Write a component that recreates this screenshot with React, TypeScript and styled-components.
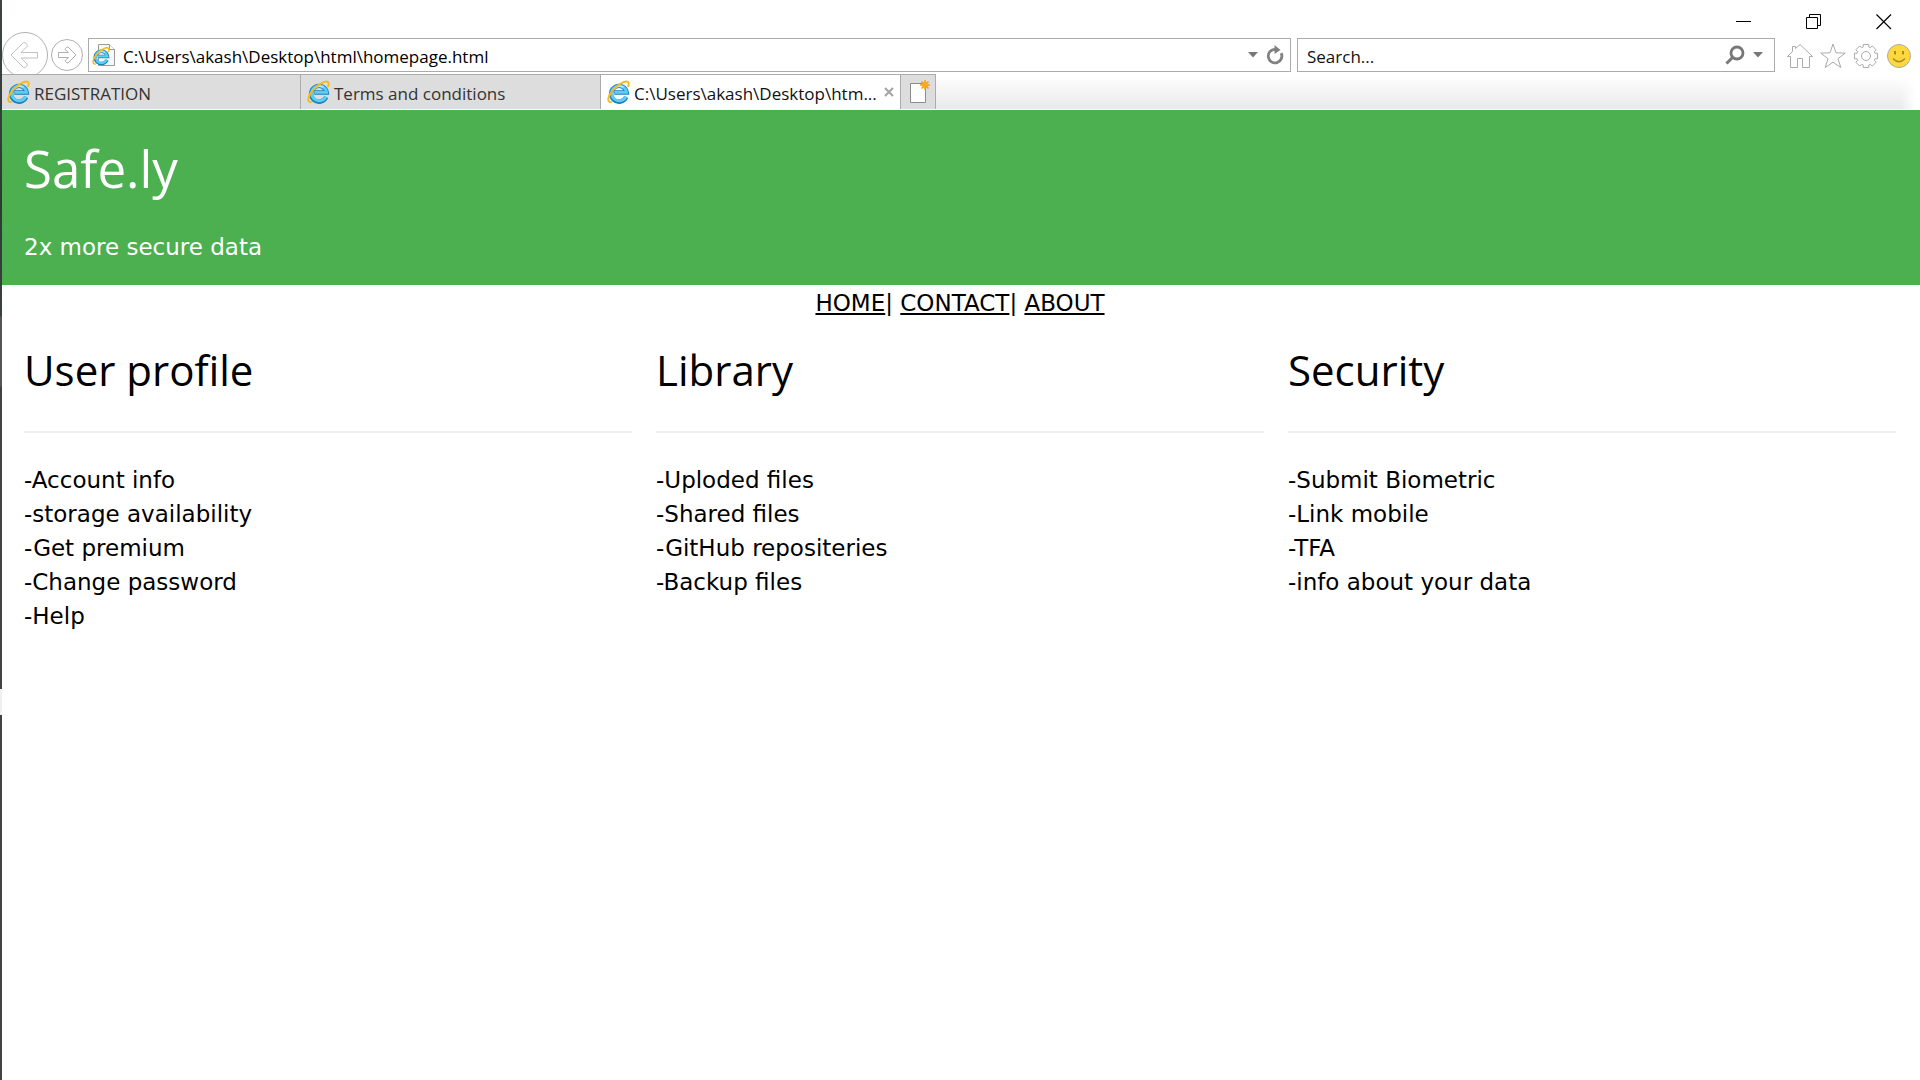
import React from "react";
import styled, { createGlobalStyle } from "styled-components";

const UI_FONT = '"Segoe UI", "Open Sans", "Noto Sans", sans-serif';
const BODY_FONT = 'Verdana, "DejaVu Sans", sans-serif';

const GlobalStyle = createGlobalStyle`
  *, *::before, *::after { box-sizing: border-box; }
  html, body { margin: 0; background: #fff; }
  button, input { font: inherit; color: inherit; }
`;

const Window = styled.div`
  position: relative;
  min-height: 100vh;
  background: #fff;
  color: #000;
  font-family: ${BODY_FONT};
  font-size: 23px;
  line-height: 34px;
`;

const DesktopEdge = styled.div`
  position: absolute;
  z-index: 3;
  top: 0;
  bottom: 0;
  left: 0;
  width: 2px;
  background: linear-gradient(
    #3f4443 0, #2b3a30 200px, #3a4040 316px, #555 317px, #555 386px, #424242 387px,
    #424242 689px, #fff 689px, #fff 690px, #f0f0f0 690px, #f0f0f0 715px, #424242 715px
  );
`;

const Chrome = styled.div`
  font-family: ${UI_FONT};
  font-size: 17px;
  line-height: 24px;
`;

const CaptionBar = styled.div`
  display: flex;
  justify-content: flex-end;
  height: 38px;
  padding-right: 1px;
`;

const PlainButton = styled.button`
  display: flex;
  flex: none;
  align-items: center;
  justify-content: center;
  padding: 0;
  border: 0;
  background: none;
`;

const CaptionButton = styled(PlainButton)`
  width: 70px;
  height: 43px;
`;

const Toolbar = styled.div`
  display: flex;
  height: 36px;
  padding: 0 8px 0 2px;
`;

const BackButton = styled(PlainButton)`
  width: 46px;
  height: 46px;
  margin-top: -6px;
`;

const ForwardButton = styled(PlainButton)`
  width: 32px;
  height: 34px;
  margin: 0 5px 0 3px;
`;

const Field = styled.div`
  display: flex;
  align-items: center;
  height: 34px;
  border: 1px solid #ababab;
  background: #fff;
`;

const AddressField = styled(Field)`
  flex: 1;
  gap: 7px;
  min-width: 0;
  padding: 0 5px 0 3px;
`;

const SearchField = styled(Field)`
  flex: 0 1 478px;
  gap: 8px;
  min-width: 0;
  margin: 0 12px 0 6px;
  padding: 0 11px 0 9px;
`;

const FieldInput = styled.input`
  flex: 1;
  min-width: 0;
  height: 30px;
  padding: 2px 0 0;
  border: 0;
  outline: 0;
  background: none;
  &::placeholder { color: #111; opacity: 1; }
`;

const ToolIcons = styled.div`
  display: flex;
  align-items: center;
  gap: 7px;
  height: 36px;
`;

const IconButton = styled(PlainButton)`
  width: 26px;
  height: 26px;
`;

const TabStrip = styled.div`
  position: relative;
  display: flex;
  height: 36px;
  padding-left: 1px;
  border-bottom: 1px solid #fff;
  background:
    linear-gradient(to left, #fff 4px, rgba(255, 255, 255, 0) 20px),
    linear-gradient(#fff 2px, #ebebeb 32px);
`;

const Tab = styled.div<{ $active?: boolean }>`
  display: flex;
  flex: 0 1 300px;
  align-items: center;
  min-width: 0;
  padding: 0 6px;
  border: solid #ababab;
  border-width: 1px 1px 0 0;
  background: ${(p) => (p.$active ? "#fff" : "#ddd")};
  color: ${(p) => (p.$active ? "#111" : "#333")};
`;

const TabButton = styled.button`
  display: flex;
  flex: 1;
  align-items: center;
  gap: 4px;
  min-width: 0;
  height: 34px;
  padding: 0;
  border: 0;
  background: none;
  white-space: nowrap;
`;

const TabTitle = styled.span`
  padding-top: 3px;
`;

const NewTab = styled(PlainButton)`
  width: 35px;
  padding-left: 3px;
  border: solid #ababab;
  border-width: 1px 1px 0 0;
  background: #ddd;
`;

const Banner = styled.header`
  padding: 17px 24px 21px;
  background: #4caf50;
  color: #fff;
`;

const SiteTitle = styled.h1`
  margin: 0 0 21px;
  font: 400 51px/82px ${UI_FONT};
`;

const Tagline = styled.p`
  margin: 0;
`;

const Nav = styled.nav`
  padding-top: 1px;
  text-align: center;
`;

const NavLink = styled.a`
  color: inherit;
  text-decoration: underline;
  text-decoration-thickness: 2px;
  text-underline-offset: 2px;
`;

const Columns = styled.main`
  display: grid;
  grid-template-columns: repeat(3, minmax(0, 1fr));
  gap: 24px;
  padding: 16px 24px;
`;

const SectionTitle = styled.h2`
  margin: 0 0 27px;
  font: 400 42px/68px ${UI_FONT};
`;

const Rule = styled.hr`
  margin: 0 0 30px;
  border: 0;
  border-top: 2px solid #eee;
`;

const Items = styled.ul`
  margin: 0;
  padding: 0;
  list-style: none;
`;

const Glyph = styled.svg`
  flex: none;
`;

const IeGlyph = () => (
  <>
    <path d="M20 17.2A8.2 8.2 0 1 1 20.6 12.6H7.6" fill="none" stroke="#1b7fc0" strokeWidth="4.6" />
    <path d="M19.8 16.6A7.8 7.8 0 1 1 20.4 12.4H8" fill="none" stroke="#5ccdf5" strokeWidth="3" />
    <path d="M7 9.4C9 6 14 5 17.4 7" fill="none" stroke="#b5ecfd" strokeWidth="1.4" />
    <path
      d="M4.2 22.6C-.6 22.8 1 15.6 6.4 9.6 11.600 3.600 19.400-.2 21.800 1.600 23 2.500 22.800 4.300 22 6"
      fill="none"
      stroke="#f6b91c"
      strokeWidth="2"
      strokeLinecap="round"
    />
  </>
);

const IeIcon = () => (
  <Glyph width="23" height="24" viewBox="0 0 24 24" aria-hidden="true">
    <IeGlyph />
  </Glyph>
);

const IePageIcon = () => (
  <Glyph width="24" height="24" viewBox="0 0 24 24" aria-hidden="true">
    <path d="M6.500 1.500h11l5 5v16h-16z" fill="#f8f8f8" stroke="#9a9a9a" />
    <path d="M17.500 1.500v5h5" fill="#fff" stroke="#9a9a9a" />
    <g transform="translate(0 4) scale(.75)">
      <IeGlyph />
    </g>
  </Glyph>
);

const Caret = () => (
  <svg width="10" height="6" aria-hidden="true">
    <path d="M0 0h10L5 5.500z" fill="#777" />
  </svg>
);

const columns = [
  {
    title: "User profile",
    items: ["-Account info", "-storage availability", "-Get premium", "-Change password", "-Help"],
  },
  { title: "Library", items: ["-Uploded files", "-Shared files", "-GitHub repositeries", "-Backup files"] },
  { title: "Security", items: ["-Submit Biometric", "-Link mobile", "-TFA", "-info about your data"] },
];

const gearPath = (() => {
  const points: string[] = [];
  for (let i = 0; i < 8; i++) {
    const mid = (i * Math.PI) / 4;
    [
      [-0.3, 9.4],
      [-0.24, 11.9],
      [0.24, 11.9],
      [0.3, 9.4],
    ].forEach(([offset, radius]) => {
      const x = 13 + radius * Math.sin(mid + offset);
      const y = 13 - radius * Math.cos(mid + offset);
      points.push(`${x.toFixed(2)} ${y.toFixed(2)}`);
    });
  }
  return `M${points.join("L")}Z`;
})();

export default function App() {
  return (
    <Window>
      <GlobalStyle />
      <DesktopEdge />
      <Chrome>
        <CaptionBar>
          <CaptionButton aria-label="Minimize">
            <svg width="16" height="16">
              <path d="M0 7.500h15" stroke="#000" />
            </svg>
          </CaptionButton>
          <CaptionButton aria-label="Restore">
            <svg width="16" height="16" fill="none" stroke="#000">
              <path d="M.5 3.500h11v11H.5zM3.500 3.500v-3h11v11h-3" />
            </svg>
          </CaptionButton>
          <CaptionButton aria-label="Close">
            <svg width="16" height="16">
              <path d="M.5.5l14.500 14.500M15 .5L.5 15" stroke="#000" strokeWidth="1.200" />
            </svg>
          </CaptionButton>
        </CaptionBar>

        <Toolbar>
          <BackButton aria-label="Back">
            <svg width="46" height="46" fill="none" stroke="#b0b0b0">
              <circle cx="23" cy="23" r="22.500" />
              <path
                d="M9 23L21.500 10.500Q23 10 25 12.500Q25.500 13.500 25 14.500L19 20.500H35.500V26H19L25 32Q25.500 33 25 34Q23 36.500 21.500 35.500Z"
                stroke="#c0c0c0"
                strokeLinejoin="round"
              />
            </svg>
          </BackButton>
          <ForwardButton aria-label="Forward">
            <svg width="32" height="32" fill="none" stroke="#b0b0b0">
              <circle cx="16" cy="16" r="15.500" />
              <path
                d="M25 16L17 24Q16 24.500 14.500 22.500Q14 21.500 14.500 21L17.500 18.500H7.500V13.500H17.500L14.500 11Q14 10.500 14.500 9.500Q16 7.500 17 8Z"
                strokeLinejoin="round"
              />
            </svg>
          </ForwardButton>
          <AddressField>
            <IePageIcon />
            <FieldInput aria-label="Address" defaultValue="C:\Users\akash\Desktop\html\homepage.html" />
            <PlainButton aria-label="Show address history">
              <Caret />
            </PlainButton>
            <PlainButton aria-label="Refresh">
              <svg width="20" height="20">
                <path d="M16.200 8.200A6.800 6.800 0 1 1 10 4.300" fill="none" stroke="#808080" strokeWidth="2.800" />
                <path d="M9.500 0l6 5-6 4z" fill="#808080" />
              </svg>
            </PlainButton>
          </AddressField>
          <SearchField>
            <FieldInput aria-label="Search" placeholder="Search..." />
            <PlainButton aria-label="Search">
              <svg width="20" height="20" fill="none" stroke="#777">
                <circle cx="12" cy="8" r="6" strokeWidth="2.800" />
                <path d="M7.500 12.500L1.500 18.500" strokeWidth="3" />
              </svg>
            </PlainButton>
            <PlainButton aria-label="Search options">
              <Caret />
            </PlainButton>
          </SearchField>
          <ToolIcons>
            <IconButton aria-label="Home">
              <svg width="26" height="26" fill="none" stroke="#ababab" strokeLinejoin="round">
                <path d="M.5 13.500L5.500 8.500V3.500H8.500V5.500L13 1.500 25.500 13.500H22.500V24.500H15.500V15.500H10.500V24.500H3.500V13.500Z" />
              </svg>
            </IconButton>
            <IconButton aria-label="Favorites">
              <svg width="26" height="26" fill="none" stroke="#ababab" strokeLinejoin="round">
                <path d="M13 1L16 9.800 25.300 10.100 18 15.700 20.800 24.500 13 19.200 5.200 24.500 8 15.700 .7 10.100 10 9.800Z" />
              </svg>
            </IconButton>
            <IconButton aria-label="Tools">
              <svg width="26" height="26" fill="none" stroke="#ababab" strokeLinejoin="round">
                <path d={gearPath} />
                <circle cx="13" cy="13" r="4.500" />
              </svg>
            </IconButton>
            <IconButton aria-label="Send a smile">
              <svg width="26" height="26">
                <circle cx="13" cy="13" r="11.500" fill="#ffd83d" stroke="#ababab" />
                <path d="M9 8v3.500M17 8v3.500" stroke="#a98c28" strokeWidth="2" />
                <path d="M7 15.500Q13 22 19 15.500" fill="none" stroke="#a98c28" strokeWidth="1.600" />
              </svg>
            </IconButton>
          </ToolIcons>
        </Toolbar>

        <TabStrip>
          <Tab>
            <TabButton>
              <IeIcon />
              <TabTitle>REGISTRATION</TabTitle>
            </TabButton>
          </Tab>
          <Tab>
            <TabButton>
              <IeIcon />
              <TabTitle>Terms and conditions</TabTitle>
            </TabButton>
          </Tab>
          <Tab $active>
            <TabButton>
              <IeIcon />
              <TabTitle>C:\Users\akash\Desktop\htm...</TabTitle>
            </TabButton>
            <PlainButton aria-label="Close tab">
              <svg width="10" height="10">
                <path d="M1 1l8 8M9 1L1 9" stroke="#a6a6a6" strokeWidth="2.200" />
              </svg>
            </PlainButton>
          </Tab>
          <NewTab aria-label="New tab">
            <svg width="22" height="24">
              <path d="M1.500 3.500h15v19h-15z" fill="#fff" stroke="#8c8c8c" />
              <path d="M16 0v10M11 5h10M12.500 1.500l7 7M19.500 1.500l-7 7" stroke="#f39c12" strokeWidth="1.500" />
              <circle cx="16" cy="5" r="3" fill="#fba919" />
            </svg>
          </NewTab>
        </TabStrip>
      </Chrome>

      <Banner>
        <SiteTitle>Safe.ly</SiteTitle>
        <Tagline>2x more secure data</Tagline>
      </Banner>
      <Nav>
        <NavLink href="#home">HOME</NavLink>| <NavLink href="#contact">CONTACT</NavLink>|{" "}
        <NavLink href="#about">ABOUT</NavLink>
      </Nav>
      <Columns>
        {columns.map((column) => (
          <section key={column.title}>
            <SectionTitle>{column.title}</SectionTitle>
            <Rule />
            <Items>
              {column.items.map((item) => (
                <li key={item}>{item}</li>
              ))}
            </Items>
          </section>
        ))}
      </Columns>
    </Window>
  );
}
